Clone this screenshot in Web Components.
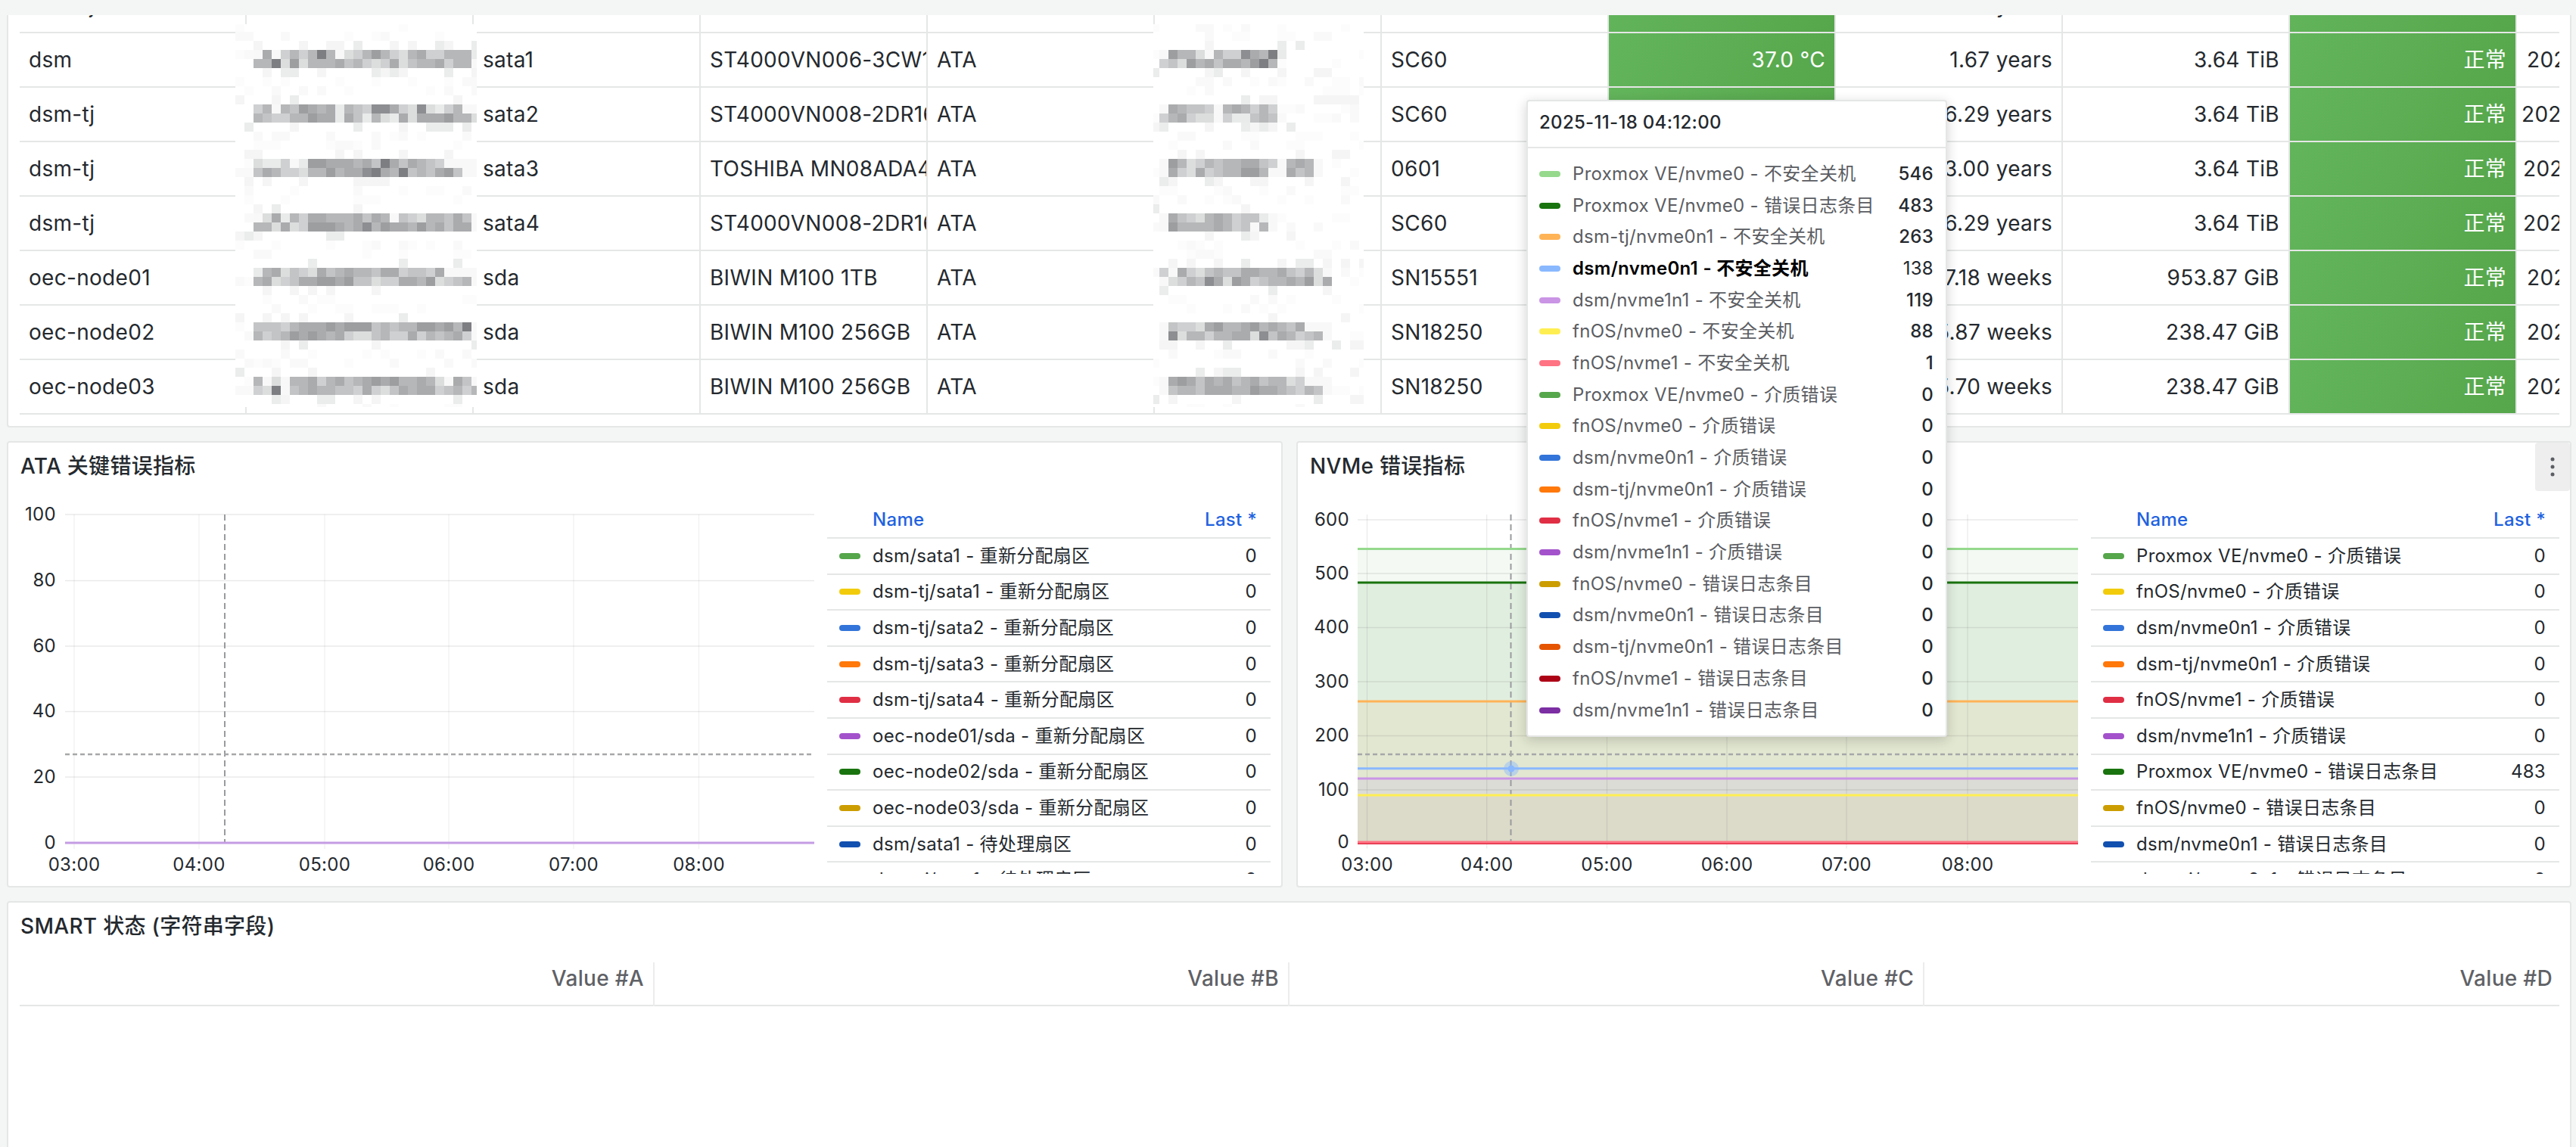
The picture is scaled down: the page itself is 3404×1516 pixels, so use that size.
<!DOCTYPE html>
<html lang="zh">
<head>
<meta charset="utf-8">
<title>SMART</title>
<style>
html, body { margin: 0; height: 100%; overflow: hidden; background: #f4f5f5; }
</style>
</head>
<body>
<dash-page>
    <dash-panel class="wide-top">
        <disk-table></disk-table>
    </dash-panel>
    <div slot="charts">
        <dash-panel title="ATA 关键错误指标">
            <div class="chart-row">
                <time-chart kind="ata"></time-chart>
                <legend-table kind="ata"></legend-table>
            </div>
        </dash-panel>
        <dash-panel title="NVMe 错误指标" menu>
            <div class="chart-row">
                <time-chart kind="nvme"></time-chart>
                <legend-table kind="nvme"></legend-table>
            </div>
        </dash-panel>
    </div>
    <dash-panel title="SMART 状态 (字符串字段)" slot="charts-after">
        <value-header></value-header>
    </dash-panel>
    <chart-tooltip slot="overlay"></chart-tooltip>
</dash-page>

<script>
const BORDER = '#e5e6e6';

// Page shell: clips the scrolled content under the top strip
class DashPage extends HTMLElement {
    constructor() {
        super();
        this.attachShadow({ mode: 'open' });
    }

    connectedCallback() {
        this.shadowRoot.innerHTML = `
            <style>
                :host {
                    display: block;
                    position: relative;
                    width: 3404px;
                    height: 1516px;
                    font-family: Inter, "Noto Sans CJK SC", sans-serif;
                    font-size: 28px;
                    line-height: 1.5;
                    letter-spacing: .3px;
                    color: #24292e;
                    padding-top: 20px;
                    box-sizing: border-box;
                }
                .scroll {
                    height: 1496px;
                    overflow: hidden;
                    padding: 0 6px 0 9px;
                    display: flex;
                    flex-direction: column;
                    gap: 18px;
                }
                ::slotted(dash-panel:first-child) { margin-top: -50px; }
                ::slotted([slot="charts"]) {
                    display: grid;
                    grid-template-columns: 1686px 1685px;
                    gap: 18px;
                }
            </style>
            <div class="scroll">
                <slot></slot>
                <slot name="charts"></slot>
                <slot name="charts-after"></slot>
            </div>
            <slot name="overlay"></slot>
        `;
    }
}

// Panel frame with optional title and the hover menu button
class DashPanel extends HTMLElement {
    constructor() {
        super();
        this.attachShadow({ mode: 'open' });
    }

    connectedCallback() {
        const title = this.getAttribute('title');
        this.removeAttribute('title');
        const menu = this.hasAttribute('menu') ? `
            <div class="menu">
                <svg width="6" height="26" viewBox="0 0 6 26">
                    <circle cx="3" cy="3" r="2.5" fill="#5b5e63"/>
                    <circle cx="3" cy="13" r="2.5" fill="#5b5e63"/>
                    <circle cx="3" cy="23" r="2.5" fill="#5b5e63"/>
                </svg>
            </div>` : '';
        this.shadowRoot.innerHTML = `
            <style>
                :host {
                    display: block;
                    position: relative;
                    background: #fff;
                    border: 2px solid ${BORDER};
                    border-radius: 4px;
                    box-sizing: border-box;
                }
                header {
                    height: 79px;
                    padding: 11px 0 0 16px;
                    box-sizing: border-box;
                    font-weight: 500;
                    line-height: 40px;
                }
                .menu {
                    position: absolute;
                    top: 0;
                    right: 0;
                    width: 46px;
                    height: 64px;
                    background: #eeeeef;
                    border-radius: 4px;
                    display: flex;
                    align-items: center;
                    justify-content: center;
                }
                ::slotted(.chart-row) {
                    display: flex;
                    height: 507px;
                }
            </style>
            ${title ? `<header>${title}</header>` : ''}
            ${menu}
            <slot></slot>
        `;
    }
}

const DISKS = [
    ['dsm-tj', '', '', '', 'ATA', '', '', 'green', '6.29 years', '3.64 TiB', '正常', '2025', 13],
    ['dsm', '', 'sata1', 'ST4000VN006-3CW104', 'ATA', '', 'SC60', '37.0 °C', '1.67 years', '3.64 TiB', '正常', '2025', 13],
    ['dsm-tj', '', 'sata2', 'ST4000VN008-2DR166', 'ATA', '', 'SC60', '', '6.29 years', '3.64 TiB', '正常', '2023', 6],
    ['dsm-tj', '', 'sata3', 'TOSHIBA MN08ADA400', 'ATA', '', '0601', '', '3.00 years', '3.64 TiB', '正常', '2023', 8],
    ['dsm-tj', '', 'sata4', 'ST4000VN008-2DR166', 'ATA', '', 'SC60', '', '6.29 years', '3.64 TiB', '正常', '2023', 8],
    ['oec-node01', '', 'sda', 'BIWIN M100 1TB', 'ATA', '', 'SN15551', '', '7.18 weeks', '953.87 GiB', '正常', '2025', 13],
    ['oec-node02', '', 'sda', 'BIWIN M100 256GB', 'ATA', '', 'SN18250', '', '5.87 weeks', '238.47 GiB', '正常', '2025', 13],
    ['oec-node03', '', 'sda', 'BIWIN M100 256GB', 'ATA', '', 'SN18250', '', '5.70 weeks', '238.47 GiB', '正常', '2025', 13]
];

// Disk table, rows scrolled past the top of the panel
class DiskTable extends HTMLElement {
    constructor() {
        super();
        this.attachShadow({ mode: 'open' });
    }

    connectedCallback() {
        const rows = DISKS.map(d => {
            const cells = d.slice(0, 11).map((text, i) => {
                const isGreen = i === 7 || i === 10;
                const cls = (isGreen ? 'green ' : '') + (i >= 7 ? 'num' : '');
                return `<div class="cell ${cls}">${text === 'green' ? '' : text}</div>`;
            }).join('');
            return `<div class="row">${cells}<div class="cell" style="padding-left:${d[12]}px">${d[11]}</div></div>`;
        }).join('');
        this.shadowRoot.innerHTML = `
            <style>
                :host {
                    display: block;
                    position: relative;
                    margin: 0 14px 15px 15px;
                    overflow: hidden;
                }
                .row {
                    display: grid;
                    grid-template-columns: repeat(12, 300px);
                    height: 72px;
                    box-sizing: border-box;
                    border-bottom: 2px solid ${BORDER};
                }
                .cell {
                    display: flex;
                    align-items: center;
                    padding: 0 12px;
                    box-sizing: border-box;
                    border-right: 2px solid ${BORDER};
                    white-space: nowrap;
                    overflow: hidden;
                }
                .num { justify-content: flex-end; }
                .green {
                    background: linear-gradient(120deg, #63b55c, #56a64b);
                    color: #fff;
                }
                mosaic-patch { top: 60px; }
            </style>
            ${rows}
            <mosaic-patch kind="serial" style="left:285px;width:319px"></mosaic-patch>
            <mosaic-patch kind="wwn" style="left:1498px;width:278px"></mosaic-patch>
        `;
    }
}

const LEVELS = ['#f8f8f8', '#e9eaea', '#dcdddd', '#cfd0d1', '#c3c4c5', '#b6b7b8', '#aaabad', '#9d9ea0', '#8d8e91', '#7d7e82'];

const PATCHES = {
    serial: {
        firstCol: 2,
        originX: 0,
        cols: 27,
        bands: [
            ['0603535950235753256335551', '5592725556453236245563550'],
            ['3505476561543886328213500', '5433557661641521626667552'],
            ['2113017766656496465430000', '4653325575668965945467400'],
            ['0261536655564650432554640', '5526237776568576657564660'],
            ['1562432645655466344360000', '5623466776744233665723450'],
            ['4443566676777454557767590', '5345767656322453363545630'],
            ['5020556356456767556520640', '3290456554436324656634535']
        ]
    },
    wwn: {
        firstCol: 1,
        originX: -4,
        cols: 24,
        bands: [
            ['07552053386591', '3427564665795'],
            ['0654430565353', '3563220311454'],
            ['075235455664305650', '063263455775006450'],
            ['0643256534410', '0755556534050'],
            ['3063245446655643520', '0235486276345565726'],
            ['0433267556756546000', '0825535566284653450'],
            ['0676465645645523000', '0455466655766543540']
        ]
    }
};

// Blurred-out block of pixels over the serial columns
class MosaicPatch extends HTMLElement {
    constructor() {
        super();
        this.attachShadow({ mode: 'open' });
    }

    // Small repeatable hash for the faint blocks around the text bands
    noise(x, y) {
        const v = Math.sin(x * 12.9898 + y * 78.233) * 43758.5453;
        return v - Math.floor(v);
    }

    connectedCallback() {
        const patch = PATCHES[this.getAttribute('kind')];
        const width = parseInt(this.style.width);
        let rects = '';
        for (let k = 0; k < 43; k++) {
            const band = Math.floor(k / 6);
            const inBand = k % 6;
            for (let c = 0; c < patch.cols; c++) {
                let fill = null;
                const text = band < 7 && (inBand === 3 || inBand === 4) ? patch.bands[band][inBand - 3] : null;
                const ch = text ? text[c - patch.firstCol] : undefined;
                if (ch !== undefined) {
                    fill = LEVELS[+ch];
                } else {
                    const n = this.noise(c + (patch.firstCol * 31), k);
                    if (inBand === 5 || inBand === 2) {
                        if (n > 0.78) fill = n > 0.92 ? '#ebecec' : '#f5f5f5';
                    } else if (n > 0.7) {
                        fill = n > 0.9 ? '#f9f9f9' : '#fcfcfc';
                    }
                }
                if (fill) {
                    rects += `<rect x="${patch.originX + c * 12}" y="${k * 12 - 2}" width="12" height="12" fill="${fill}"/>`;
                }
            }
        }
        this.shadowRoot.innerHTML = `
            <style>
                :host {
                    display: block;
                    position: absolute;
                    top: 60px;
                    height: 506px;
                    background: #fff;
                    overflow: hidden;
                }
                svg { display: block; }
            </style>
            <svg width="${width}" height="506" viewBox="0 0 ${width} 506" shape-rendering="crispEdges">${rects}</svg>
        `;
    }
}

const CHARTS = {
    ata: {
        box: [11, 664, 1082, 500],
        left: 86, right: 1076, top: 680,
        labelX: 74,
        ticks: [[100, 680], [80, 767.5], [60, 854], [40, 940.5], [20, 1027], [0, 1114]],
        hours: [98, 263, 429, 593, 758, 923.5],
        crossX: 297, crossY: 997,
        bands: [],
        lines: [[1114, '#c49ce4']],
        gridV: 'rgba(36,41,46,.07)'
    },
    nvme: {
        box: [1715, 664, 1048, 500],
        left: 1794, right: 2746, top: 680,
        labelX: 1783,
        ticks: [[600, 687], [500, 758], [400, 829.5], [300, 901], [200, 972.5], [100, 1044], [0, 1113.5]],
        hours: [1806.5, 1964.7, 2123.5, 2282, 2440, 2600],
        crossX: 1996.5, crossY: 997,
        bands: [
            [726, 770, '#f4f9f3'],
            [770, 927, '#e0eedf'],
            [927, 1029, '#e2e7d1'],
            [1029, 1051, '#dcdcd6'],
            [1051, 1113, '#dcdac8']
        ],
        lines: [
            [725.5, '#96d98d'], [770, '#19730e'], [927, '#ffb357'], [1015.8, '#8ab8ff'],
            [1029, '#ca95e5'], [1051, '#ffee52'], [1114.5, '#e02f44'], [1113, '#ff7383']
        ],
        gridV: 'rgba(36,41,46,.1)',
        dot: [1997, 1016]
    }
};

// Time series plot; the viewBox uses page coordinates
class TimeChart extends HTMLElement {
    constructor() {
        super();
        this.attachShadow({ mode: 'open' });
    }

    connectedCallback() {
        const c = CHARTS[this.getAttribute('kind')];
        const [bx, by, bw, bh] = c.box;
        const bottom = c.ticks[c.ticks.length - 1][1];
        const labels = ['03:00', '04:00', '05:00', '06:00', '07:00', '08:00'];

        const bands = c.bands.map(b =>
            `<rect x="${c.left}" y="${b[0]}" width="${c.right - c.left}" height="${b[1] - b[0]}" fill="${b[2]}"/>`).join('');
        const gridH = c.ticks.map(t =>
            `<line x1="${c.left}" x2="${c.right}" y1="${t[1]}" y2="${t[1]}" stroke="rgba(36,41,46,.1)" stroke-width="1.5"/>`).join('');
        const gridV = c.hours.map(x =>
            `<line x1="${x}" x2="${x}" y1="${c.top}" y2="${bottom + 8}" stroke="${c.gridV}" stroke-width="1.2"/>`).join('');
        const yText = c.ticks.map(t =>
            `<text x="${c.labelX}" y="${t[1] - 1}" dy=".36em" text-anchor="end">${t[0]}</text>`).join('');
        const xText = c.hours.map((x, i) =>
            `<text x="${x}" y="1142" dy=".36em" text-anchor="middle">${labels[i]}</text>`).join('');
        const lines = c.lines.map(l =>
            `<line x1="${c.left}" x2="${c.right}" y1="${l[0]}" y2="${l[0]}" stroke="${l[1]}" stroke-width="3"/>`).join('');
        const dot = c.dot ? `
            <circle cx="${c.dot[0]}" cy="${c.dot[1]}" r="10" fill="#8ab8ff" fill-opacity=".45"/>
            <circle cx="${c.dot[0]}" cy="${c.dot[1]}" r="4.5" fill="#8ab8ff"/>` : '';

        this.shadowRoot.innerHTML = `
            <style>
                :host { display: block; flex: none; width: ${bw}px; }
                svg { display: block; }
                text { font-size: 24px; fill: #24292e; }
            </style>
            <svg width="${bw}" height="${bh}" viewBox="${bx} ${by} ${bw} ${bh}">
                ${bands}${gridH}${gridV}${yText}${xText}
                <line x1="${c.crossX}" x2="${c.crossX}" y1="${c.top}" y2="${bottom}" stroke="#9a9b9e" stroke-width="2" stroke-dasharray="8 5"/>
                <line x1="${c.left}" x2="${c.right}" y1="${c.crossY}" y2="${c.crossY}" stroke="#a6a7a9" stroke-width="2.5" stroke-dasharray="6 4"/>
                ${lines}${dot}
            </svg>
        `;
    }
}

const PALETTE = ['#56a64b', '#f2cc0c', '#3274d9', '#ff780a', '#e02f44', '#a352cc', '#19730e', '#cc9d00', '#1250b0', '#e55400'];

const LEGENDS = {
    ata: [
        ['dsm/sata1 - 重新分配扇区', 0], ['dsm-tj/sata1 - 重新分配扇区', 0], ['dsm-tj/sata2 - 重新分配扇区', 0],
        ['dsm-tj/sata3 - 重新分配扇区', 0], ['dsm-tj/sata4 - 重新分配扇区', 0], ['oec-node01/sda - 重新分配扇区', 0],
        ['oec-node02/sda - 重新分配扇区', 0], ['oec-node03/sda - 重新分配扇区', 0], ['dsm/sata1 - 待处理扇区', 0],
        ['dsm-tj/sata1 - 待处理扇区', 0]
    ],
    nvme: [
        ['Proxmox VE/nvme0 - 介质错误', 0], ['fnOS/nvme0 - 介质错误', 0], ['dsm/nvme0n1 - 介质错误', 0],
        ['dsm-tj/nvme0n1 - 介质错误', 0], ['fnOS/nvme1 - 介质错误', 0], ['dsm/nvme1n1 - 介质错误', 0],
        ['Proxmox VE/nvme0 - 错误日志条目', 483], ['fnOS/nvme0 - 错误日志条目', 0], ['dsm/nvme0n1 - 错误日志条目', 0],
        ['dsm-tj/nvme0n1 - 错误日志条目', 0]
    ]
};

// Scrolled legend table beside a chart
class LegendTable extends HTMLElement {
    constructor() {
        super();
        this.attachShadow({ mode: 'open' });
    }

    connectedCallback() {
        const rows = LEGENDS[this.getAttribute('kind')].map((item, i) => `
            <div class="row">
                <i style="background:${PALETTE[i]}"></i>
                <span class="name">${item[0]}</span>
                <span>${item[1]}</span>
            </div>`).join('');
        this.shadowRoot.innerHTML = `
            <style>
                :host {
                    display: block;
                    flex: 1;
                    margin-right: 14px;
                    height: 491px;
                    overflow: hidden;
                    font-size: 24px;
                }
                .row, .head {
                    display: flex;
                    align-items: center;
                    height: 47.6px;
                    box-sizing: border-box;
                    border-bottom: 2px solid ${BORDER};
                    padding: 0 18px 0 16px;
                    white-space: nowrap;
                }
                .head {
                    height: 48px;
                    color: #1f62e0;
                    font-weight: 500;
                    padding-left: 60px;
                    justify-content: space-between;
                }
                i {
                    flex: none;
                    width: 28px;
                    height: 8px;
                    border-radius: 4px;
                    margin-right: 16px;
                }
                .name { flex: 1; }
            </style>
            <div class="head"><span>Name</span><span>Last *</span></div>
            ${rows}
        `;
    }
}

const TOOLTIP_ROWS = [
    ['#96d98d', 'Proxmox VE/nvme0 - 不安全关机', 546], ['#19730e', 'Proxmox VE/nvme0 - 错误日志条目', 483],
    ['#ffb357', 'dsm-tj/nvme0n1 - 不安全关机', 263], ['#8ab8ff', 'dsm/nvme0n1 - 不安全关机', 138, true],
    ['#ca95e5', 'dsm/nvme1n1 - 不安全关机', 119], ['#ffee52', 'fnOS/nvme0 - 不安全关机', 88],
    ['#ff7383', 'fnOS/nvme1 - 不安全关机', 1], ['#56a64b', 'Proxmox VE/nvme0 - 介质错误', 0],
    ['#f2cc0c', 'fnOS/nvme0 - 介质错误', 0], ['#3274d9', 'dsm/nvme0n1 - 介质错误', 0],
    ['#ff780a', 'dsm-tj/nvme0n1 - 介质错误', 0], ['#e02f44', 'fnOS/nvme1 - 介质错误', 0],
    ['#a352cc', 'dsm/nvme1n1 - 介质错误', 0], ['#cc9d00', 'fnOS/nvme0 - 错误日志条目', 0],
    ['#1250b0', 'dsm/nvme0n1 - 错误日志条目', 0], ['#e55400', 'dsm-tj/nvme0n1 - 错误日志条目', 0],
    ['#ad0317', 'fnOS/nvme1 - 错误日志条目', 0], ['#7c2ea3', 'dsm/nvme1n1 - 错误日志条目', 0]
];

// Hover tooltip lying over the table and the NVMe chart
class ChartTooltip extends HTMLElement {
    constructor() {
        super();
        this.attachShadow({ mode: 'open' });
    }

    connectedCallback() {
        const rows = TOOLTIP_ROWS.map(r => `
            <div class="row ${r[3] ? 'active' : ''}">
                <i style="background:${r[0]}"></i>
                <span class="name">${r[1]}</span>
                <span class="val">${r[2]}</span>
            </div>`).join('');
        this.shadowRoot.innerHTML = `
            <style>
                :host {
                    display: block;
                    position: absolute;
                    left: 2017px;
                    top: 132px;
                    width: 556px;
                    height: 842px;
                    box-sizing: border-box;
                    background: #fff;
                    border: 2px solid ${BORDER};
                    border-radius: 4px;
                    box-shadow: 0 4px 16px rgba(24, 26, 27, .2);
                    font-size: 24px;
                }
                header {
                    height: 62px;
                    padding: 0 15px 4px;
                    box-sizing: border-box;
                    display: flex;
                    align-items: center;
                    font-weight: 500;
                    border-bottom: 2px solid ${BORDER};
                }
                .list { padding: 13px 16px 0 15px; }
                .row {
                    display: flex;
                    align-items: center;
                    height: 41.7px;
                    white-space: nowrap;
                }
                i {
                    flex: none;
                    width: 28px;
                    height: 8px;
                    border-radius: 4px;
                    margin-right: 16px;
                }
                .name { flex: 1; color: #5b5d62; }
                .val { font-weight: 500; }
                .active .name { color: #000; font-weight: 600; }
                .active .val { font-weight: 400; }
            </style>
            <header>2025-11-18 04:12:00</header>
            <div class="list">${rows}</div>
        `;
    }
}

// Header of the empty string-field table
class ValueHeader extends HTMLElement {
    constructor() {
        super();
        this.attachShadow({ mode: 'open' });
    }

    connectedCallback() {
        const cols = ['A', 'B', 'C', 'D'].map(c => `<div>Value #${c}</div>`).join('');
        this.shadowRoot.innerHTML = `
            <style>
                :host {
                    display: grid;
                    grid-template-columns: repeat(4, 1fr);
                    height: 56px;
                    margin: 0 14px 300px 15px;
                    border-bottom: 2px solid ${BORDER};
                    color: #5f6166;
                    font-weight: 500;
                }
                div {
                    display: flex;
                    align-items: center;
                    justify-content: flex-end;
                    padding: 0 12px 16px;
                    border-right: 2px solid #ececed;
                }
                div:last-child { border-right: 0; padding-right: 9px; }
            </style>
            ${cols}
        `;
    }
}

customElements.define('dash-page', DashPage);
customElements.define('dash-panel', DashPanel);
customElements.define('mosaic-patch', MosaicPatch);
customElements.define('disk-table', DiskTable);
customElements.define('time-chart', TimeChart);
customElements.define('legend-table', LegendTable);
customElements.define('chart-tooltip', ChartTooltip);
customElements.define('value-header', ValueHeader);
</script>
</body>
</html>
